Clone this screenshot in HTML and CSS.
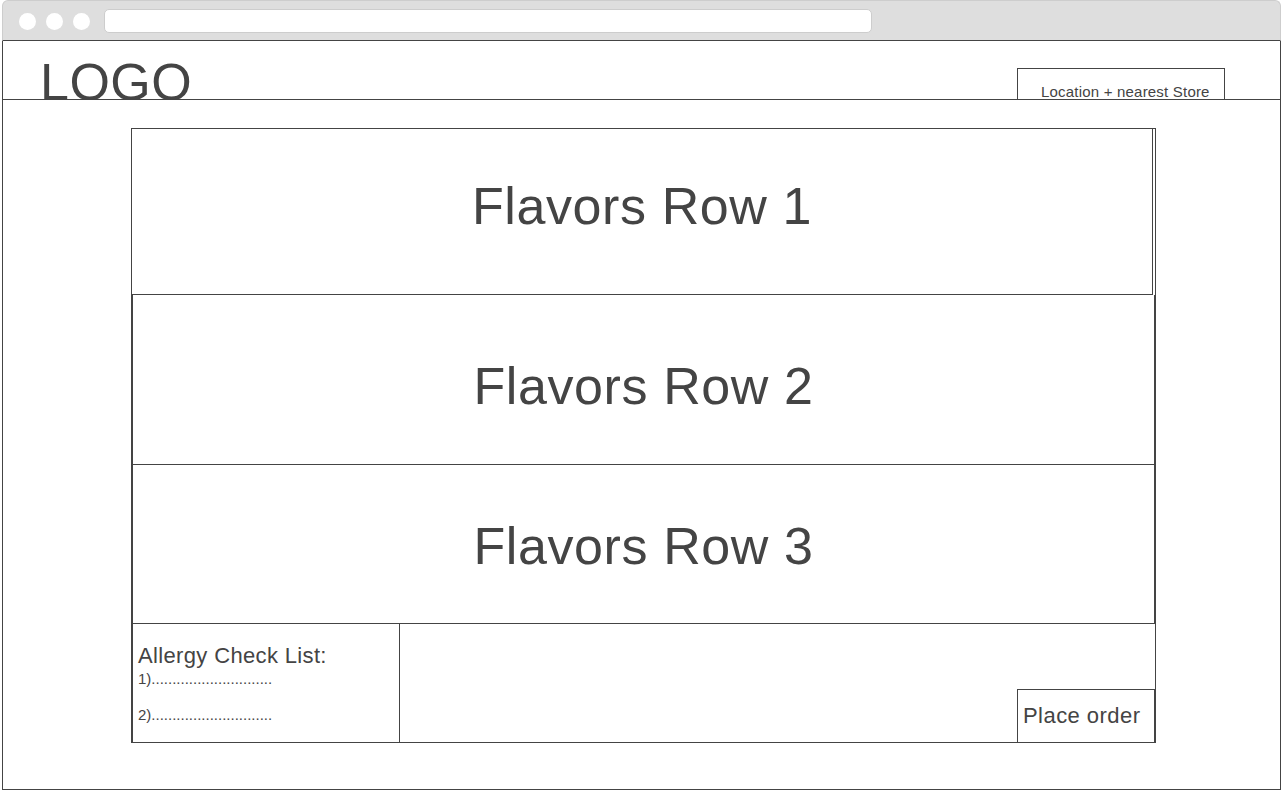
FILE: index.html
```html
<!DOCTYPE html>
<html lang="en">
<head>
<meta charset="utf-8">
<title>Flavors wireframe</title>
<link rel="stylesheet" href="styles.css">
</head>
<body>
<div class="window">
  <div class="titlebar">
    <span class="dot"></span>
    <span class="dot"></span>
    <span class="dot dot-last"></span>
    <div class="urlbar"></div>
  </div>
  <div class="page">
    <header class="header">
      <div class="logo">LOGO</div>
      <div class="location">Location + nearest Store</div>
    </header>
    <main class="main">
      <section class="row row-1">Flavors Row 1</section>
      <section class="row row-2">Flavors Row 2</section>
      <section class="row row-3">Flavors Row 3</section>
      <section class="bottom">
        <div class="allergy">
          <div class="allergy-title">Allergy Check List:</div>
          <div class="allergy-item item-1">1).............................</div>
          <div class="allergy-item item-2">2).............................</div>
        </div>
        <div class="order">Place order</div>
      </section>
    </main>
  </div>
</div>
</body>
</html>
```

FILE: styles.css
```css
body {
  margin: 0;
  background: #fff;
  color: #444;
  font-family: "Liberation Sans", Arial, sans-serif;
}

.window {
  margin-left: 2px;
  width: 1279px;
}

.titlebar {
  box-sizing: border-box;
  height: 41px;
  background: #dedede;
  border: 1px solid #cdcdcd;
  border-bottom: 1px solid #444;
  border-radius: 6px 6px 0 0;
  display: flex;
  align-items: flex-start;
  padding-left: 16px;
}

.dot {
  width: 17px;
  height: 17px;
  border-radius: 50%;
  background: #fff;
  margin-top: 12px;
  margin-right: 10px;
}

.dot-last {
  margin-right: 14px;
}

.urlbar {
  box-sizing: border-box;
  width: 768px;
  height: 24px;
  margin-top: 8px;
  background: #fff;
  border: 1px solid #cdcdcd;
  border-radius: 5px;
}

.page {
  box-sizing: border-box;
  height: 749px;
  border: 1px solid #444;
  border-top: none;
}

.header {
  height: 58px;
  border-bottom: 1px solid #444;
  display: flex;
  justify-content: space-between;
  align-items: flex-start;
  overflow: hidden;
}

.logo {
  font-size: 52px;
  line-height: 60px;
  letter-spacing: 0.5px;
  margin: 11px 0 0 37px;
}

.location {
  box-sizing: border-box;
  width: 208px;
  height: 45px;
  margin: 27px 55px 0 0;
  padding: 14px 0 0 23px;
  border: 1px solid #444;
  font-size: 15px;
  line-height: 17px;
  letter-spacing: 0.2px;
}

.main {
  box-sizing: border-box;
  width: 1025px;
  height: 615px;
  margin: 28px 0 0 128px;
  border: 1px solid #444;
  display: flex;
  flex-direction: column;
}

.row {
  box-sizing: border-box;
  flex: none;
  border-bottom: 1px solid #444;
  text-align: center;
  font-size: 52px;
  line-height: 60px;
  letter-spacing: 0.6px;
}

.row-1 {
  height: 166px;
  margin-right: 2px;
  border-right: 1px solid #444;
  padding-top: 47px;
}

.row-2 {
  height: 170px;
  border-left: 1px solid #444;
  border-right: 1px solid #444;
  padding-top: 61px;
}

.row-3 {
  height: 159px;
  border-left: 1px solid #444;
  border-right: 1px solid #444;
  padding-top: 51px;
}

.bottom {
  flex: 1;
  display: flex;
  justify-content: space-between;
  align-items: flex-end;
  border-left: 1px solid #444;
}

.allergy {
  box-sizing: border-box;
  width: 267px;
  align-self: stretch;
  border-right: 1px solid #444;
  padding: 19px 0 0 5px;
}

.allergy-title {
  font-size: 22px;
  line-height: 25px;
  letter-spacing: 0.35px;
}

.allergy-item {
  font-size: 15px;
  line-height: 17px;
}

.item-1 {
  margin-top: 2px;
}

.item-2 {
  margin-top: 19px;
}

.order {
  box-sizing: border-box;
  width: 138px;
  height: 53px;
  border: 1px solid #444;
  border-bottom: none;
  padding: 13px 0 0 5px;
  font-size: 22px;
  line-height: 25px;
  letter-spacing: 0.45px;
}
```
